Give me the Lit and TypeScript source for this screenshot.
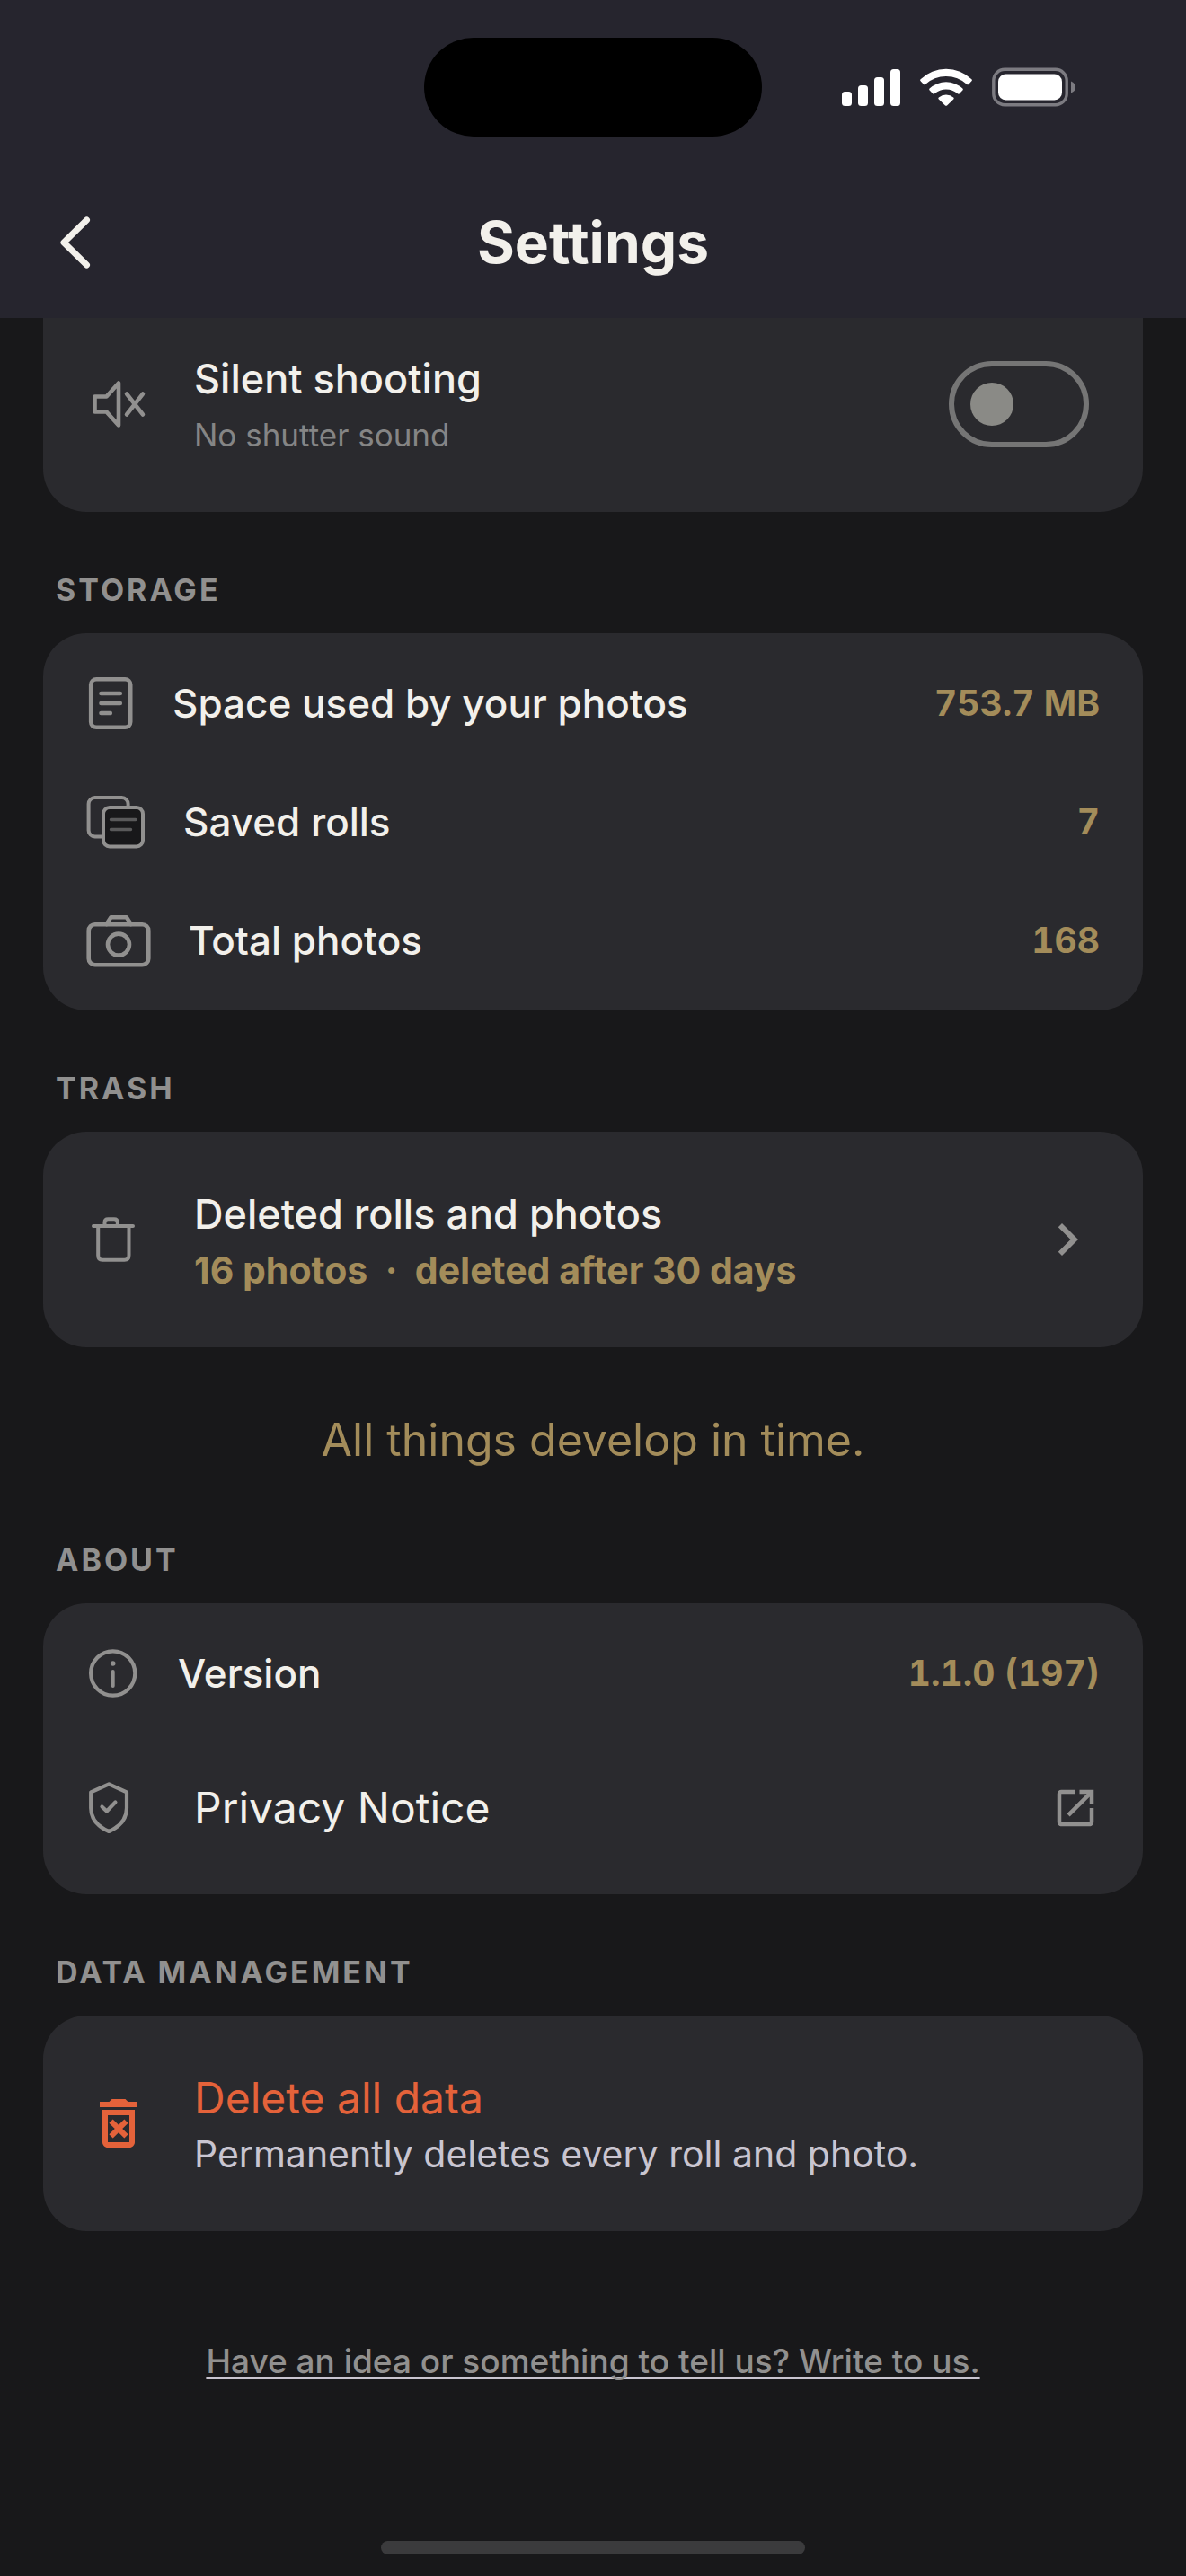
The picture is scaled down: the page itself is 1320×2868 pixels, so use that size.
import { LitElement, html, css, svg } from "lit";
import { customElement, property, state } from "lit/decorators.js";

type IconName =
  | "back" | "muted" | "document" | "rolls" | "camera" | "trash"
  | "chevron" | "info" | "shield" | "external" | "erase";

interface Glyph {
  width: number;
  height: number;
  viewBox: string;
  body: unknown;
}

const line = (width: number, height: number, body: unknown): Glyph => ({
  width, height, viewBox: `0 0 ${width} ${height}`, body,
});

const GLYPHS: Record<IconName, Glyph> = {
  back: line(60, 60, svg`<path d="M42.5 5 17 30l25.5 25" stroke-width="7"/>`),
  muted: line(72, 72, svg`
    <path d="M9.5 27.5H22.5L36 12.5V59.5L22.5 44.5H9.5Z" stroke-width="4.6"/>
    <path d="M45 24.5 63 47.5M63 24.5 45 47.5" stroke-width="4.5"/>`),
  document: line(54, 66, svg`
    <rect x="5.2" y="6.3" width="44" height="53.5" rx="6"/>
    <path d="M16.5 22H37.8M16.5 33H37.8M16.5 44H26.8"/>`),
  rolls: line(66, 66, svg`
    <rect x="2.6" y="6" width="44" height="43.5" rx="7" stroke-width="4"/>
    <rect x="19" y="17" width="44" height="43.5" rx="7" stroke-width="4" fill="#18181a"/>
    <path d="M27.5 30.5H55M27.5 41.5H49.5" stroke="#59595a" stroke-width="3.4"/>`),
  camera: line(72, 66, svg`
    <rect x="2.7" y="15.2" width="66.6" height="45" rx="7"/>
    <path d="M22.5 15 27.5 7.3H44.8L49.8 15"/>
    <circle cx="36" cy="37.6" r="12"/>`),
  trash: line(72, 72, svg`
    <path d="M8 21H52M13.2 21V53.5Q13.2 58.8 18 58.8H42.5Q47.5 58.8 47.5 53.5V21" stroke-width="4"/>
    <path d="M20.5 21V17Q20.5 13.2 24.3 13.2H31Q34.8 13.2 34.8 17V21" stroke-width="4"/>`),
  chevron: {
    width: 72, height: 72, viewBox: "0 0 24 24",
    body: svg`<path fill="currentColor" stroke="none" d="M10 6 8.59 7.41 13.17 12l-4.58 4.59L10 18l6-6z"/>`,
  },
  info: line(60, 60, svg`
    <circle cx="29.7" cy="30" r="24.6" stroke-width="4.2"/>
    <circle cx="29.7" cy="19" r="2.8" fill="currentColor" stroke="none"/>
    <path d="M29.7 28V44" stroke-width="4"/>`),
  shield: line(72, 72, svg`
    <path d="M25.2 9.3 45 18.4V36C45 50 35.5 57.5 25.2 62C15 57.5 5.2 50 5.2 36V18.4Z" stroke-width="4.2"/>
    <path d="M17.5 34.5 22.8 39.5 32.4 29.5" stroke-width="4.2"/>`),
  external: {
    width: 54, height: 54, viewBox: "0 0 24 24",
    body: svg`<path fill="currentColor" stroke="none" d="M19 19H5V5h7V3H5c-1.11 0-2 .9-2 2v14c0 1.1.89 2 2 2h14c1.1 0 2-.9 2-2v-7h-2v7zM14 3v2h3.59l-9.83 9.83 1.41 1.41L19 6.41V10h2V3h-7z"/>`,
  },
  erase: {
    width: 72, height: 72, viewBox: "0 0 24 24",
    body: svg`<path fill="currentColor" stroke="none" d="M14.12 10.47 12 12.59l-2.13-2.12-1.41 1.41L10.59 14l-2.12 2.12 1.41 1.41L12 15.41l2.12 2.12 1.41-1.41L13.41 14l2.12-2.12zM15.5 4l-1-1h-5l-1 1H5v2h14V4zM6 19c0 1.1.9 2 2 2h8c1.1 0 2-.9 2-2V7H6v12zM8 9h8v10H8V9z"/>`,
  },
};

@customElement("ui-icon")
class UiIcon extends LitElement {
  @property() name: IconName = "info";

  static styles = css`
    :host { display: block; flex: none; }
    .glyph { display: block; }
  `;

  render() {
    const g = GLYPHS[this.name];
    return html`<svg class="glyph" width=${g.width} height=${g.height} viewBox=${g.viewBox}
      fill="none" stroke="currentColor" stroke-width="4.6" stroke-linecap="round"
      stroke-linejoin="round" aria-hidden="true">${g.body}</svg>`;
  }
}

@customElement("status-bar")
class StatusBar extends LitElement {
  static styles = css`
    :host { display: block; }
    .bar {
      display: grid;
      grid-template-columns: 1fr auto 1fr;
      align-items: center;
      padding: 42px 0 34px;
    }
    .island {
      grid-column: 2;
      width: 376px;
      height: 110px;
      border-radius: 55px;
      background: #000;
    }
    .signals {
      display: flex;
      align-items: center;
      gap: 22px;
      padding-left: 89px;
    }
    .signal { display: block; flex: none; }
  `;

  render() {
    return html`
      <div class="bar">
        <div class="island"></div>
        <div class="signals">
          <svg class="signal" width="65" height="42" viewBox="0 0 65 42" fill="#fff" aria-hidden="true">
            <rect x="0" y="26" width="11" height="16" rx="3.5"/>
            <rect x="18" y="19" width="11" height="23" rx="3.5"/>
            <rect x="36" y="10" width="11" height="32" rx="3.5"/>
            <rect x="54" y="1" width="11" height="41" rx="3.5"/>
          </svg>
          <svg class="signal" width="58" height="42" viewBox="0 0 58 42" fill="#fff" aria-hidden="true">
            <path d="M.6 12.2A41 41 0 0 1 57.4 12.2Q58.4 13.2 57.4 14.2L54.2 17.8Q53.2 18.8 52.2 17.9A34.5 34.5 0 0 0 5.8 17.9Q4.8 18.8 3.8 17.8L.6 14.2Q-.4 13.2 .6 12.2Z"/>
            <path d="M10.6 22.6A27 27 0 0 1 47.4 22.6Q48.4 23.6 47.4 24.6L43.8 28.2Q42.8 29.2 41.8 28.3A19.5 19.5 0 0 0 16.2 28.3Q15.2 29.2 14.2 28.2L10.6 24.6Q9.6 23.6 10.6 22.6Z"/>
            <path d="M20.8 32.4A13 13 0 0 1 37.2 32.4Q38.2 33.4 37.2 34.4L30 41.4Q29 42.3 28 41.4L20.8 34.4Q19.8 33.4 20.8 32.4Z"/>
          </svg>
          <svg class="signal" width="94" height="44" viewBox="0 0 94 44" aria-hidden="true">
            <rect x="1.8" y="2.3" width="81.4" height="39.4" rx="12.5" fill="none" stroke="#7c7b81" stroke-width="3.4"/>
            <rect x="7" y="7.5" width="71" height="29" rx="8.5" fill="#fff"/>
            <path d="M88 15.5Q93 17.5 93 22T88 28.5Z" fill="#7c7b81"/>
          </svg>
        </div>
      </div>
    `;
  }
}

@customElement("app-root")
class AppRoot extends LitElement {
  @state() private silent = false;

  static styles = css`
    :host {
      display: flex;
      flex-direction: column;
      min-height: 100vh;
      background: #18181a;
      color: #f2f0eb;
      font-family: Inter, "Liberation Sans", sans-serif;
    }
    *, *::before, *::after { box-sizing: border-box; }

    .header { background: #26252e; }
    .toolbar {
      display: grid;
      grid-template-columns: 168px 1fr 168px;
      align-items: center;
      min-height: 168px;
    }
    .back, .row-action {
      margin: 0;
      border: 0;
      background: none;
      color: inherit;
      font: inherit;
      text-align: left;
      text-decoration: none;
      cursor: pointer;
    }
    .back {
      display: grid;
      place-items: center;
      height: 168px;
      padding: 0;
    }
    .title {
      margin: 0;
      font-size: 64px;
      line-height: 80px;
      font-weight: 700;
      text-align: center;
    }

    .content { padding: 0 48px; }
    .card {
      margin: 0;
      border-radius: 48px;
      background: #2a2a2e;
    }
    .card-continued {
      padding-bottom: 24px;
      border-radius: 0 0 48px 48px;
    }
    .card-list { padding: 12px 0; }

    .section-title {
      margin: 0;
      padding: 66px 14px 27px;
      color: #91908f;
      font-size: 34px;
      line-height: 42px;
      font-weight: 700;
      letter-spacing: 3px;
      text-transform: uppercase;
    }

    .row, .row-action {
      display: flex;
      align-items: center;
      width: 100%;
      padding: 0 48px;
    }
    .row { gap: 42px; min-height: 132px; }
    .row-action { gap: 48px; min-height: 240px; }
    .row-action.toggle { min-height: 192px; padding-right: 60px; }
    .row-action.single { min-height: 168px; }

    .icon { color: #91908f; }
    .label {
      flex: 1;
      font-size: 44px;
      line-height: 62px;
      font-weight: 500;
    }
    .value, .accent {
      color: #a38c5a;
      font-size: 41px;
      line-height: 62px;
      font-weight: 700;
    }
    .value { font-size: 39px; font-variant-numeric: tabular-nums; }
    .texts {
      display: flex;
      flex: 1;
      flex-direction: column;
      padding-top: 6px;
    }
    .single .texts { padding-top: 0; }
    .name { font-size: 45px; line-height: 62px; font-weight: 500; }
    .name-plain { font-size: 48px; line-height: 62px; font-weight: 400; }
    .hint { color: #858585; font-size: 35px; line-height: 62px; font-weight: 400; }
    .note { color: #c9c5d0; font-size: 41px; line-height: 62px; font-weight: 400; }
    .danger { color: #e4623a; }

    .switch {
      appearance: none;
      flex: none;
      display: flex;
      align-items: center;
      width: 156px;
      height: 96px;
      margin: 0;
      padding: 0 18px;
      border: 6px solid #757575;
      border-radius: 48px;
      cursor: pointer;
    }
    .switch::before {
      content: "";
      width: 48px;
      height: 48px;
      border-radius: 50%;
      background: #8a8a86;
    }
    .switch:checked { justify-content: flex-end; border-color: #a38c5a; }
    .switch:checked::before { background: #a38c5a; }

    .motto {
      margin: 0;
      padding: 72px 0 16px;
      color: #a38c5a;
      font-size: 50px;
      line-height: 62px;
      font-weight: 400;
      text-align: center;
    }
    .contact {
      margin: 0;
      padding: 120px 0 60px;
      font-size: 37px;
      line-height: 50px;
      font-weight: 500;
      text-align: center;
    }
    .contact-link {
      color: #91908f;
      text-decoration: underline;
      text-decoration-color: #c9c5d0;
      text-decoration-thickness: 3px;
      text-decoration-skip-ink: none;
      text-underline-offset: 4px;
    }
    .home {
      width: 472px;
      height: 15px;
      margin: auto auto 24px;
      border-radius: 8px;
      background: #3b3b3d;
    }
  `;

  private fact(icon: IconName, label: string, value: string) {
    return html`
      <div class="row">
        <ui-icon class="icon" name=${icon}></ui-icon>
        <span class="label">${label}</span>
        <span class="value">${value}</span>
      </div>
    `;
  }

  private onToggle(event: Event) {
    this.silent = (event.target as HTMLInputElement).checked;
  }

  render() {
    return html`
      <header class="header">
        <status-bar></status-bar>
        <div class="toolbar">
          <button class="back" type="button" aria-label="Back">
            <ui-icon name="back"></ui-icon>
          </button>
          <h1 class="title">Settings</h1>
        </div>
      </header>

      <main class="content">
        <div class="card card-continued">
          <label class="row-action toggle" for="silent">
            <ui-icon class="icon" name="muted"></ui-icon>
            <span class="texts">
              <span class="name">Silent shooting</span>
              <span class="hint">No shutter sound</span>
            </span>
            <input class="switch" id="silent" type="checkbox" role="switch"
              .checked=${this.silent} @change=${this.onToggle}>
          </label>
        </div>

        <h2 class="section-title">Storage</h2>
        <div class="card card-list">
          ${this.fact("document", "Space used by your photos", "753.7 MB")}
          ${this.fact("rolls", "Saved rolls", "7")}
          ${this.fact("camera", "Total photos", "168")}
        </div>

        <h2 class="section-title">Trash</h2>
        <div class="card">
          <button class="row-action" type="button">
            <ui-icon class="icon" name="trash"></ui-icon>
            <span class="texts">
              <span class="name">Deleted rolls and photos</span>
              <span class="accent">16 photos &nbsp;·&nbsp; deleted after 30 days</span>
            </span>
            <ui-icon class="icon" name="chevron"></ui-icon>
          </button>
        </div>

        <p class="motto">All things develop in time.</p>

        <h2 class="section-title">About</h2>
        <div class="card card-list">
          ${this.fact("info", "Version", "1.1.0 (197)")}
          <a class="row-action single" href="#privacy">
            <ui-icon class="icon" name="shield"></ui-icon>
            <span class="texts"><span class="name-plain">Privacy Notice</span></span>
            <ui-icon class="icon" name="external"></ui-icon>
          </a>
        </div>

        <h2 class="section-title">Data management</h2>
        <div class="card">
          <button class="row-action" type="button">
            <ui-icon class="danger" name="erase"></ui-icon>
            <span class="texts">
              <span class="name-plain danger">Delete all data</span>
              <span class="note">Permanently deletes every roll and photo.</span>
            </span>
          </button>
        </div>

        <p class="contact">
          <a class="contact-link" href="#contact">Have an idea or something to tell us? Write to us.</a>
        </p>
      </main>

      <div class="home"></div>
    `;
  }
}
